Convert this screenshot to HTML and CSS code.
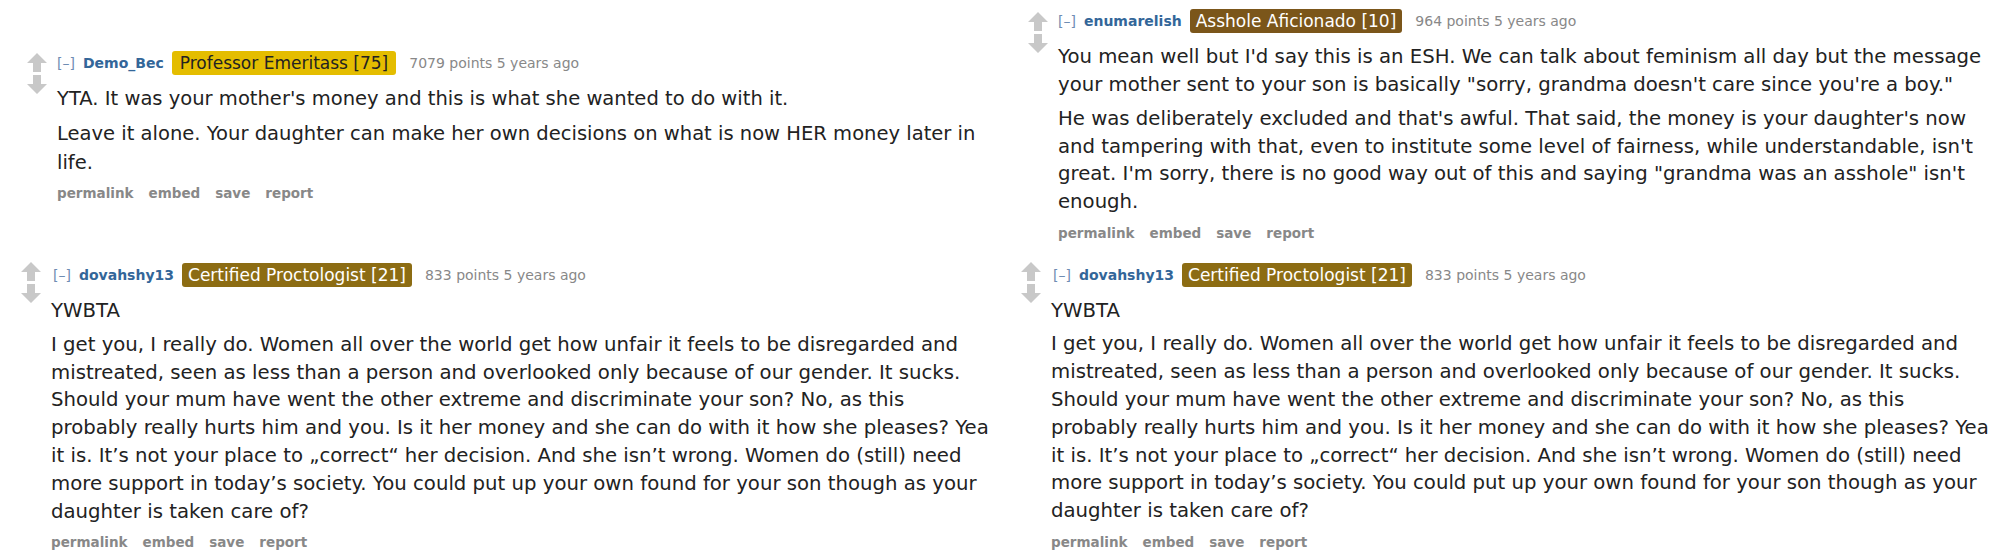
FILE: index.html
```html
<!DOCTYPE html>
<html lang="en">
<head>
<meta charset="utf-8">
<title>Comments</title>
<link rel="stylesheet" href="styles.css">
</head>
<body>
<div class="page">
  <div class="col col-left">
    <div class="comment c1">
      <div class="vote">
        <svg class="arrow" viewBox="0 0 20 19"><polygon points="10,0 20,10 14,10 14,19 6,19 6,10 0,10"/></svg>
        <svg class="arrow" viewBox="0 0 20 19"><polygon points="10,19 20,9 14,9 14,0 6,0 6,9 0,9"/></svg>
      </div>
      <div class="entry">
        <div class="tagline"><span class="expand">[–]</span><span class="author">Demo_Bec</span><span class="flair flair-prof">Professor Emeritass [75]</span><span class="score">7079 points 5 years ago</span></div>
        <div class="md">
          <p>YTA. It was your mother's money and this is what she wanted to do with it.</p>
          <p>Leave it alone. Your daughter can make her own decisions on what is now HER money later in<br>life.</p>
        </div>
        <ul class="buttons"><li>permalink</li><li>embed</li><li>save</li><li>report</li></ul>
      </div>
    </div>
    <div class="comment c2">
      <div class="vote">
        <svg class="arrow" viewBox="0 0 20 19"><polygon points="10,0 20,10 14,10 14,19 6,19 6,10 0,10"/></svg>
        <svg class="arrow" viewBox="0 0 20 19"><polygon points="10,19 20,9 14,9 14,0 6,0 6,9 0,9"/></svg>
      </div>
      <div class="entry">
        <div class="tagline"><span class="expand">[–]</span><span class="author">dovahshy13</span><span class="flair flair-cert">Certified Proctologist [21]</span><span class="score">833 points 5 years ago</span></div>
        <div class="md">
          <p>YWBTA</p>
          <p>I get you, I really do. Women all over the world get how unfair it feels to be disregarded and<br>mistreated, seen as less than a person and overlooked only because of our gender. It sucks.<br>Should your mum have went the other extreme and discriminate your son? No, as this<br>probably really hurts him and you. Is it her money and she can do with it how she pleases? Yea<br>it is. It’s not your place to „correct“ her decision. And she isn’t wrong. Women do (still) need<br>more support in today’s society. You could put up your own found for your son though as your<br>daughter is taken care of?</p>
        </div>
        <ul class="buttons"><li>permalink</li><li>embed</li><li>save</li><li>report</li></ul>
      </div>
    </div>
  </div>
  <div class="col col-right">
    <div class="comment c3">
      <div class="vote">
        <svg class="arrow" viewBox="0 0 20 19"><polygon points="10,0 20,10 14,10 14,19 6,19 6,10 0,10"/></svg>
        <svg class="arrow" viewBox="0 0 20 19"><polygon points="10,19 20,9 14,9 14,0 6,0 6,9 0,9"/></svg>
      </div>
      <div class="entry">
        <div class="tagline"><span class="expand">[–]</span><span class="author">enumarelish</span><span class="flair flair-ass">Asshole Aficionado [10]</span><span class="score">964 points 5 years ago</span></div>
        <div class="md">
          <p>You mean well but I'd say this is an ESH. We can talk about feminism all day but the message<br>your mother sent to your son is basically "sorry, grandma doesn't care since you're a boy."</p>
          <p>He was deliberately excluded and that's awful. That said, the money is your daughter's now<br>and tampering with that, even to institute some level of fairness, while understandable, isn't<br>great. I'm sorry, there is no good way out of this and saying "grandma was an asshole" isn't<br>enough.</p>
        </div>
        <ul class="buttons"><li>permalink</li><li>embed</li><li>save</li><li>report</li></ul>
      </div>
    </div>
    <div class="comment c2 c4">
      <div class="vote">
        <svg class="arrow" viewBox="0 0 20 19"><polygon points="10,0 20,10 14,10 14,19 6,19 6,10 0,10"/></svg>
        <svg class="arrow" viewBox="0 0 20 19"><polygon points="10,19 20,9 14,9 14,0 6,0 6,9 0,9"/></svg>
      </div>
      <div class="entry">
        <div class="tagline"><span class="expand">[–]</span><span class="author">dovahshy13</span><span class="flair flair-cert">Certified Proctologist [21]</span><span class="score">833 points 5 years ago</span></div>
        <div class="md">
          <p>YWBTA</p>
          <p>I get you, I really do. Women all over the world get how unfair it feels to be disregarded and<br>mistreated, seen as less than a person and overlooked only because of our gender. It sucks.<br>Should your mum have went the other extreme and discriminate your son? No, as this<br>probably really hurts him and you. Is it her money and she can do with it how she pleases? Yea<br>it is. It’s not your place to „correct“ her decision. And she isn’t wrong. Women do (still) need<br>more support in today’s society. You could put up your own found for your son though as your<br>daughter is taken care of?</p>
        </div>
        <ul class="buttons"><li>permalink</li><li>embed</li><li>save</li><li>report</li></ul>
      </div>
    </div>
  </div>
</div>
</body>
</html>
```

FILE: styles.css
```css
html, body {
  margin: 0;
  padding: 0;
  background: #ffffff;
}

body {
  width: 2000px;
  height: 552px;
  overflow: hidden;
  font-family: "DejaVu Sans", Verdana, sans-serif;
  color: #222222;
}

.page {
  display: grid;
  grid-template-columns: 1000px 1000px;
  height: 552px;
}

.col {
  display: flex;
  flex-direction: column;
}

.col-left {
  padding-top: 50px;
}

.col-right {
  padding-top: 8px;
}

.comment {
  display: flex;
  flex-direction: row;
  gap: 10px;
}

.vote {
  display: flex;
  flex-direction: column;
  gap: 3px;
  width: 20px;
  flex: none;
}

.arrow {
  width: 20px;
  height: 19px;
  fill: #c8c8c8;
}

.entry {
  flex: 1;
  min-width: 0;
}

.tagline {
  display: flex;
  align-items: center;
  height: 26px;
  font-size: 14px;
  white-space: nowrap;
}

.expand {
  color: #6f8db3;
  margin-right: 8px;
}

.author {
  color: #336699;
  font-weight: bold;
  margin-right: 8px;
}

.flair {
  font-size: 17px;
  line-height: 24px;
  padding: 0 6px;
  border-radius: 3px;
  margin-right: 13px;
}

.flair-prof {
  background: #e4bd00;
  color: #222222;
  padding: 0 8px;
}

.flair-cert {
  background: #8c6c13;
  color: #ffffff;
}

.flair-ass {
  background: #7b561a;
  color: #ffffff;
}

.score {
  color: #888888;
}

.md {
  white-space: nowrap;
  margin-top: 9px;
  font-size: 19.7px;
}

.md p {
  margin: 0;
}

.md p + p {
  margin-top: 6px;
}

.buttons {
  list-style: none;
  margin: 6px 0 0 0;
  padding: 0;
  display: flex;
  gap: 15px;
  font-size: 13.5px;
  line-height: 20px;
  font-weight: bold;
  color: #888888;
}

/* comment 1 : Demo_Bec */
.c1 {
  padding-left: 27px;
}

.c1 .md {
  font-size: 19.55px;
  line-height: 29px;
  margin-top: 8px;
}

.c1 .vote {
  padding-top: 3px;
}

/* comment 2/4 : dovahshy13 */
.c2 {
  padding-left: 21px;
  margin-top: 59px;
}

.c2 .expand {
  margin-left: 2px;
}

.c2 .md {
  line-height: 27.8px;
}

.c2 .buttons {
  margin-top: 7px;
}

/* comment 3 : enumarelish */
.c3 {
  padding-left: 28px;
}

.c3 .md {
  line-height: 27.6px;
}

.c3 .md p + p {
  margin-top: 7px;
}

.c3 .buttons {
  margin-top: 7px;
}

.c3 .vote {
  padding-top: 4px;
}

.c4 {
  margin-top: 19px;
}
```
